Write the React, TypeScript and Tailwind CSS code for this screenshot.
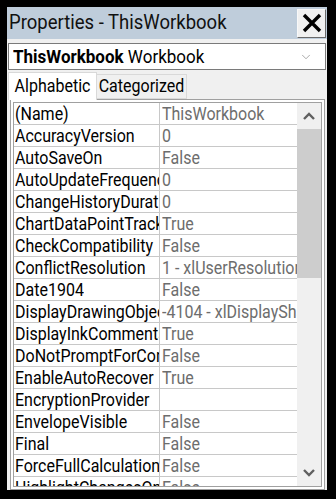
import { ChevronDown } from 'lucide-react'

const rows: [string, string][] = [
  ['(Name)', 'ThisWorkbook'],
  ['AccuracyVersion', '0'],
  ['AutoSaveOn', 'False'],
  ['AutoUpdateFrequency', '0'],
  ['ChangeHistoryDuration', '0'],
  ['ChartDataPointTrack', 'True'],
  ['CheckCompatibility', 'False'],
  ['ConflictResolution', '1 - xlUserResolution'],
  ['Date1904', 'False'],
  ['DisplayDrawingObjects', '-4104 - xlDisplayShapes'],
  ['DisplayInkComments', 'True'],
  ['DoNotPromptForConvert', 'False'],
  ['EnableAutoRecover', 'True'],
  ['EncryptionProvider', ''],
  ['EnvelopeVisible', 'False'],
  ['Final', 'False'],
  ['ForceFullCalculation', 'False'],
  ['HighlightChangesOnScreen', 'False'],
]

const font = { fontFamily: 'Roboto, "Noto Sans", sans-serif' }

export default function App() {
  return (
    <div
      className="w-[336px] h-[499px] bg-black pt-[7px] pl-[7px] pr-[9px] pb-[9px] overflow-hidden"
      style={font}
    >
      <div className="flex h-full flex-col bg-[#f0f0f0]">
        {/* title */}
        <div className="flex h-[32px] shrink-0 items-center justify-between bg-[#bfcddb] pl-[2px] pr-[1px]">
          <span className="inline-block scale-y-[1.08] text-[18.5px] leading-none text-[#111]">
            Properties - ThisWorkbook
          </span>
          <button
            type="button"
            className="flex h-[29px] w-[29px] items-center justify-center border border-[#f8f8f8] border-r-[#696969] border-b-[#696969] bg-[#f0f0f0]"
          >
            <svg width="22" height="22" viewBox="0 0 22 22">
              <path d="M3 3 L19 19 M19 3 L3 19" stroke="#000" strokeWidth="3.4" strokeLinecap="butt" />
            </svg>
          </button>
        </div>

        {/* object dropdown */}
        <div className="mt-[4px] ml-[1px] mr-[1px] flex h-[27px] shrink-0 items-center justify-between border border-[#7a7a7a] bg-white pl-[4px] pr-[12px]">
          <span className="inline-block scale-y-[1.1] text-[17px] leading-none text-black">
            <b>ThisWorkbook</b> Workbook
          </span>
          <ChevronDown size={14} strokeWidth={1} className="text-[#6d6d6d]" />
        </div>

        {/* tabs */}
        <div className="mt-[2px] flex h-[27px] shrink-0 items-end pl-[1px]">
          <div className="relative z-10 -mb-[1px] flex h-[28px] w-[89px] items-center justify-center border border-b-0 border-[#d9d9d9] bg-white text-[16px] leading-none text-black">
            <span className="inline-block scale-y-[1.1]">Alphabetic</span>
          </div>
          <div className="flex h-[25px] w-[90px] items-center justify-center border border-l-0 border-[#d9d9d9] bg-[#f0f0f0] text-[16px] leading-none text-black">
            <span className="inline-block scale-y-[1.1]">Categorized</span>
          </div>
        </div>

        {/* grid */}
        <div className="ml-[3px] mr-[2px] flex min-h-0 min-w-0 flex-1 border border-[#a0a0a0] bg-white p-[2px]">
          <div className="flex min-h-0 min-w-0 flex-1 border border-[#a0a0a0]">
            <div className="min-w-0 flex-1 overflow-hidden bg-white">
              {rows.map(([name, value]) => (
                <div key={name} className="flex h-[22px] border-b border-[#c8c8c8] text-[16px] leading-[21px]">
                  <div className="w-[145px] shrink-0 overflow-hidden whitespace-nowrap pl-[1px] text-black">
                    <span className="inline-block scale-y-[1.1]">{name}</span>
                  </div>
                  <div className="w-px shrink-0 bg-[#c8c8c8]" />
                  <div className="min-w-0 flex-1 overflow-hidden whitespace-nowrap pl-[2px] text-[#6d6d6d]">
                    <span className="inline-block scale-y-[1.1]">{value}</span>
                  </div>
                </div>
              ))}
            </div>
            {/* scrollbar */}
            <div className="flex w-[24px] shrink-0 flex-col bg-[#f0f0f0]">
              <div className="flex h-[26px] shrink-0 items-center justify-center">
                <svg width="12" height="8" viewBox="0 0 12 8">
                  <path d="M1 7 L6 2 L11 7" fill="none" stroke="#606060" strokeWidth="2.4" />
                </svg>
              </div>
              <div className="h-[149px] shrink-0 bg-[#cdcdcd]" />
              <div className="flex-1" />
              <div className="flex h-[26px] shrink-0 items-center justify-center">
                <svg width="12" height="8" viewBox="0 0 12 8">
                  <path d="M1 1 L6 6 L11 1" fill="none" stroke="#606060" strokeWidth="2.4" />
                </svg>
              </div>
            </div>
          </div>
        </div>
      </div>
    </div>
  )
}
